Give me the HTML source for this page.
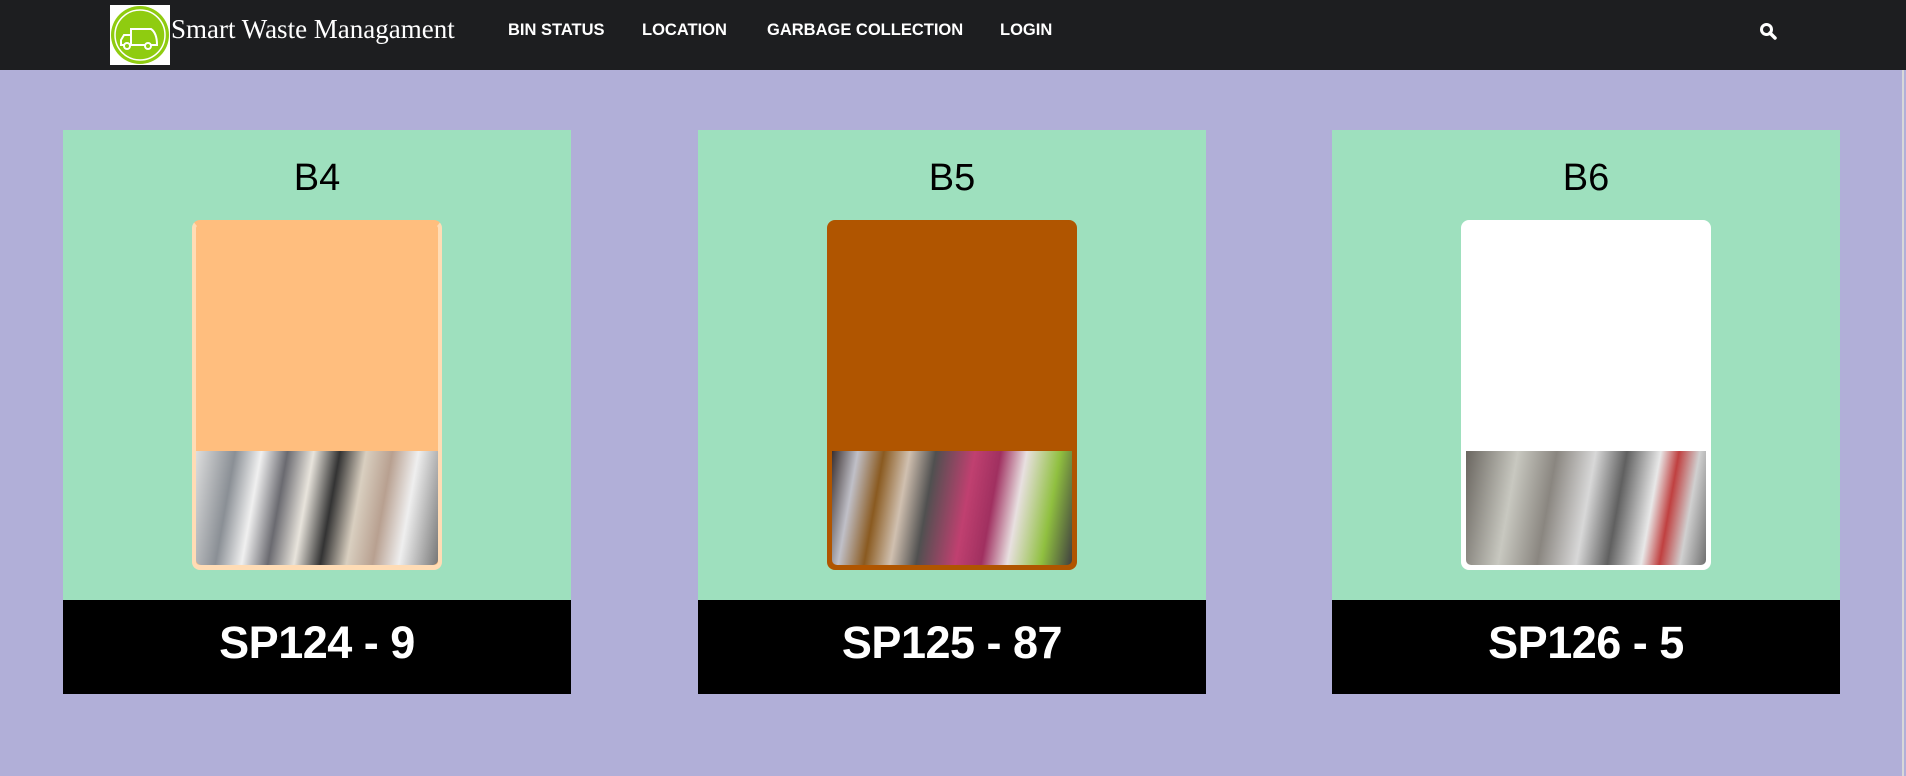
<!DOCTYPE html>
<html><head><meta charset="utf-8"><style>
*{margin:0;padding:0;box-sizing:border-box}
body{width:1906px;height:776px;background:#b1afd8;position:relative;overflow:hidden;font-family:"Liberation Sans",sans-serif}
.hdr{position:absolute;left:0;top:0;width:1906px;height:70px;background:#1d1e20}
.logo{position:absolute;left:110px;top:5px;width:60px;height:60px;background:#fff}
.title{position:absolute;left:171px;top:14px;color:#fff;font-family:"Liberation Serif",serif;font-size:27px;white-space:nowrap}
.nav{position:absolute;top:21px;color:#fff;font-weight:bold;font-size:16.5px;white-space:nowrap}
.card{position:absolute;top:130px;width:508px;height:564px;background:#9ee0be}
.card h2{position:absolute;top:27px;width:100%;text-align:center;font-weight:normal;font-size:38px;color:#000}
.bin{position:absolute;left:129px;top:90px;width:250px;height:350px;border:5px solid;border-radius:8px;overflow:hidden}
.img{position:absolute;left:0;right:0;bottom:0;height:114px;border-radius:0 0 5px 5px}
.foot{position:absolute;left:0;bottom:0;width:100%;height:94px;background:#000;color:#fff;font-weight:bold;font-size:45px;text-align:center;line-height:86px;letter-spacing:-0.5px}
</style></head><body>
<div class="hdr">
<div class="logo"><svg width="60" height="60" viewBox="0 0 60 60"><circle cx="30" cy="30" r="29" fill="#8fcc10"/><circle cx="30" cy="30" r="25" fill="none" stroke="#fff" stroke-width="1.5"/><g fill="none" stroke="#fff" stroke-width="2"><path d="M21 40 V24 H41 Q47 28 47 40 Z"/><path d="M21 30 H14 L11 35 V40 H21"/><circle cx="17" cy="41" r="3" fill="#8fcc10"/><circle cx="38" cy="41" r="3" fill="#8fcc10"/></g></svg></div>
<div class="title">Smart Waste Managament</div>
<div class="nav" style="left:508px">BIN STATUS</div>
<div class="nav" style="left:642px">LOCATION</div>
<div class="nav" style="left:767px">GARBAGE COLLECTION</div>
<div class="nav" style="left:1000px">LOGIN</div>
<svg style="position:absolute;left:1759px;top:22px" width="18" height="18" viewBox="0 0 18 18"><circle cx="7.5" cy="7.5" r="5" fill="none" stroke="#fff" stroke-width="3"/><path d="M11 11 L16 16" stroke="#fff" stroke-width="3.5" stroke-linecap="round"/></svg>
</div>
<div style="position:absolute;left:1902px;top:70px;width:2px;height:706px;background:#d8d8d8"></div>

<div class="card" style="left:63px"><h2>B4</h2>
<div class="bin" style="background:#ffbe7e;border-color:#ffdcb5;border-top-color:#ffbe7e;border-left-width:4px;border-right-width:4px"><div class="img" style="background:linear-gradient(100deg,#ddd 0%,#8a8f95 15%,#f0f0f0 25%,#6a6a70 35%,#e8e4dc 45%,#333 55%,#d9cfc0 65%,#b8a090 75%,#efefef 85%,#777 100%)"></div></div>
<div class="foot">SP124 - 9</div></div>

<div class="card" style="left:698px"><h2>B5</h2>
<div class="bin" style="background:#b05500;border-color:#b05500"><div class="img" style="background:linear-gradient(100deg,#3a3030 0%,#c0c0c8 10%,#8a5a20 20%,#d0c0b0 30%,#505050 40%,#c04070 55%,#a03060 65%,#e8e0e0 75%,#90c040 88%,#404040 100%)"></div></div>
<div class="foot">SP125 - 87</div></div>

<div class="card" style="left:1332px"><h2>B6</h2>
<div class="bin" style="background:#fff;border-color:#fff"><div class="img" style="background:linear-gradient(100deg,#6a6660 0%,#c8c8c0 20%,#8a8680 35%,#d8d8d8 50%,#606060 62%,#e8e8e8 75%,#c04040 82%,#d0d0d0 90%,#707070 100%)"></div></div>
<div class="foot">SP126 - 5</div></div>
</body></html>
